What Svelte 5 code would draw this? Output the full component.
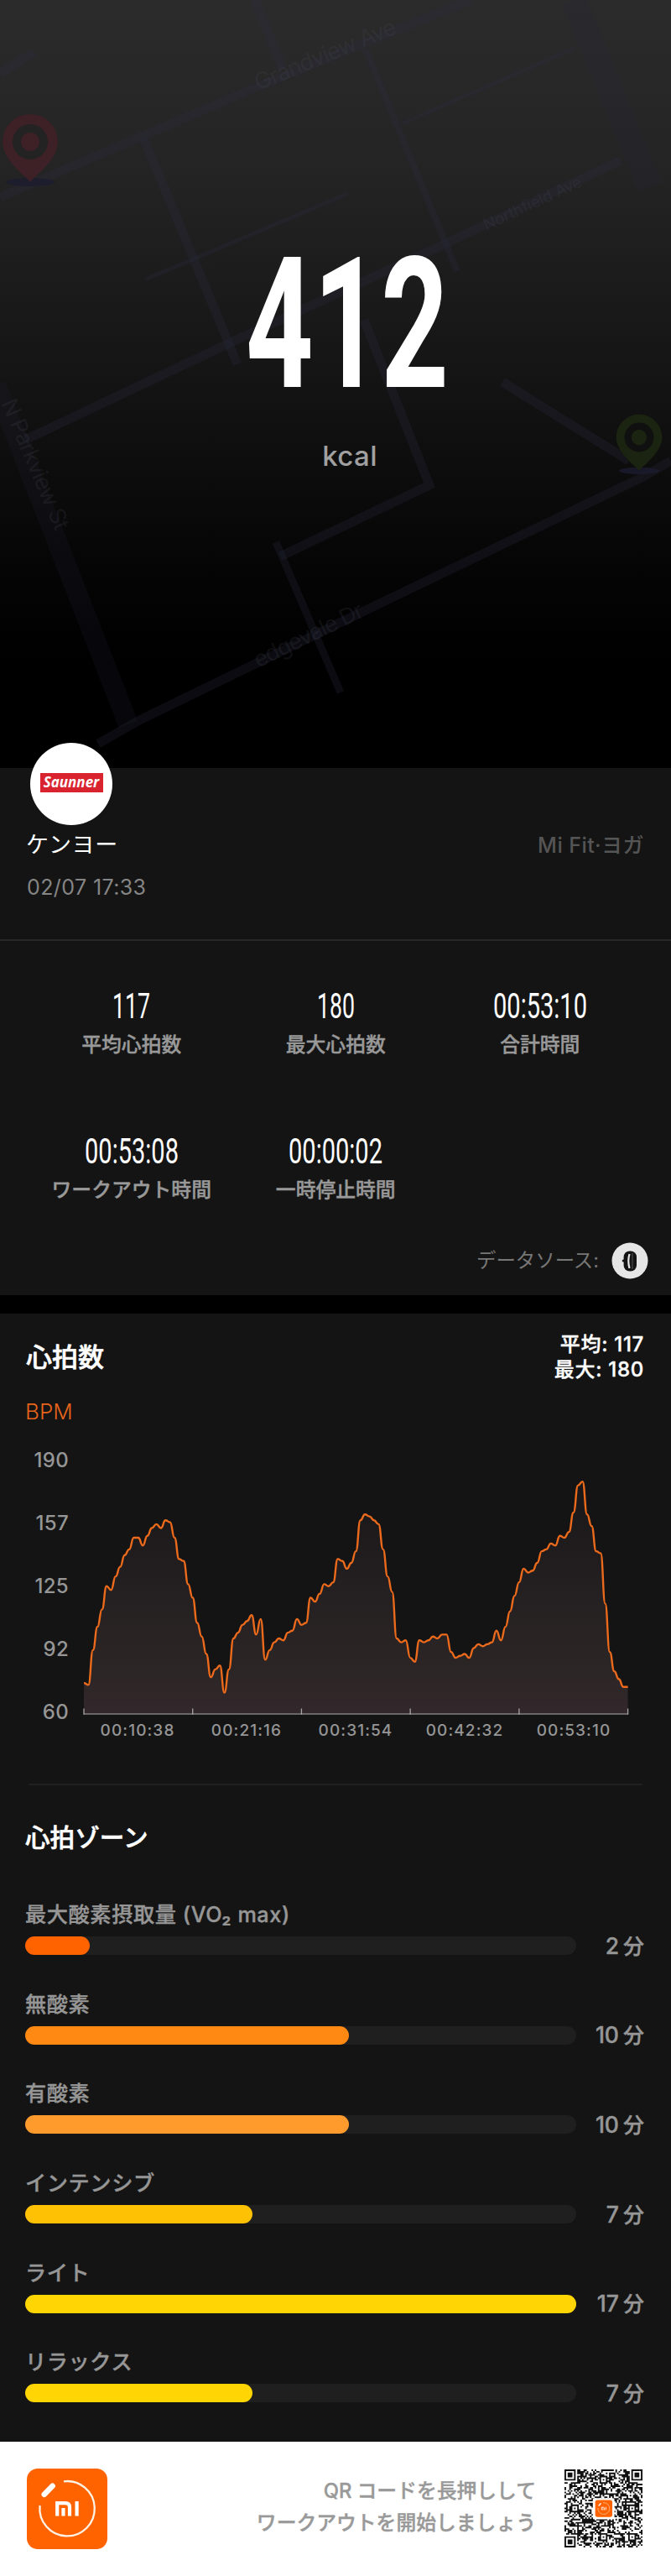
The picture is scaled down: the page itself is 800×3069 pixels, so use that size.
<script lang="ts">
	type Stat = { value: string; label: string; width: number };
	type Zone = { label: string; minutes: number; color: string };

	const stats: Stat[] = [
		{ value: "117", label: "平均心拍数", width: 45 },
		{ value: "180", label: "最大心拍数", width: 45 },
		{ value: "00:53:10", label: "合計時間", width: 112 },
		{ value: "00:53:08", label: "ワークアウト時間", width: 112 },
		{ value: "00:00:02", label: "一時停止時間", width: 112 },
	];

	const zones: Zone[] = [
		{ label: "最大酸素摂取量 (VO₂ max)", minutes: 2, color: "#ff6300" },
		{ label: "無酸素", minutes: 10, color: "#ff8912" },
		{ label: "有酸素", minutes: 10, color: "#ff9b2d" },
		{ label: "インテンシブ", minutes: 7, color: "#ffc103" },
		{ label: "ライト", minutes: 17, color: "#ffd603" },
		{ label: "リラックス", minutes: 7, color: "#ffd603" },
	];
	const maxMinutes = Math.max(...zones.map((z) => z.minutes));

	const yLabels = [190, 157, 125, 92, 60];
	const xLabels = ["00:10:38", "00:21:16", "00:31:54", "00:42:32", "00:53:10"];

	const bpm = [
		76, 75, 93, 105, 114, 126, 124, 131, 136, 142, 145, 151, 151, 147, 152,
		156, 158, 156, 160, 159, 151, 140, 139, 127, 120, 107, 100, 91, 79, 83,
		85, 71, 83, 99, 102, 106, 108, 111, 101, 109, 88, 93, 97, 99, 98, 102,
		103, 109, 106, 107, 120, 118, 122, 127, 126, 128, 140, 139, 135, 138,
		144, 160, 163, 162, 160, 158, 145, 131, 123, 99, 97, 98, 89, 87, 98, 97,
		98, 100, 99, 101, 101, 92, 89, 90, 91, 89, 94, 96, 95, 96, 97, 103, 98,
		105, 113, 121, 128, 135, 133, 134, 138, 144, 145, 148, 147, 152, 151,
		154, 164, 178, 180, 163, 157, 144, 143, 117, 92, 82, 78, 74, 74,
	];

	const chartWidth = 648.6;
	const chartHeight = 300;
	const step = chartWidth / (bpm.length - 1);
	const toY = (v: number) => chartHeight - ((v - 60) * chartHeight) / 130;

	const line = bpm
		.map((v, i) => {
			const x = i * step;
			if (i === 0) return `M0 ${toY(v)}`;
			const mid = x - step / 2;
			return `C${mid} ${toY(bpm[i - 1])} ${mid} ${toY(v)} ${x} ${toY(v)}`;
		})
		.join("");
	const area = `${line}V${chartHeight}H0Z`;

	const qrSize = 49;
	const qrPath = buildQr();

	function finder(x: number, y: number): boolean | null {
		const corners = [
			[0, 0],
			[qrSize - 7, 0],
			[0, qrSize - 7],
		];
		for (const [cx, cy] of corners) {
			const d = Math.max(Math.abs(x - cx - 3), Math.abs(y - cy - 3));
			if (d <= 4) return d !== 4 && d !== 2;
		}
		for (const cx of [6, 24, 42]) {
			for (const cy of [6, 24, 42]) {
				const d = Math.max(Math.abs(x - cx), Math.abs(y - cy));
				if (d <= 2) return d !== 1;
			}
		}
		return null;
	}

	function buildQr() {
		let seed = 20717;
		let d = "";
		for (let y = 0; y < qrSize; y++) {
			for (let x = 0; x < qrSize; x++) {
				seed = (seed * 1103515245 + 12345) % 2147483648;
				const fixed = finder(x, y);
				const dark = fixed === null ? seed / 2147483648 > 0.47 : fixed;
				if (dark) d += `M${x} ${y}h1v1h-1z`;
			}
		}
		return d;
	}
</script>

{#snippet pin(cx: number, cy: number, scale: number, color: string, hole: string)}
	<g transform="translate({cx} {cy}) scale({scale})">
		<ellipse cx="0" cy="48" rx="29" ry="5" fill="#1c1c30" opacity="0.8" />
		<path
			d="M0 48C-5 41-33 22-33 0A33 33 0 0 1 33 0C33 22 5 41 0 48Z"
			fill={color}
		/>
		<circle r="16" fill="none" stroke={hole} stroke-width="10" />
	</g>
{/snippet}

{#snippet miLogo()}
	<rect width="96" height="96" rx="13" fill="#ff6300" />
	<path
		d="M44 15.3A32.7 32.7 0 1 1 15.6 44"
		fill="none"
		stroke="#fff3e6"
		stroke-width="2.3"
	/>
	<path
		d="M20.8 30.8L30.6 20.8"
		stroke="#fff"
		stroke-width="6.6"
		stroke-linecap="round"
	/>
	<path
		d="M36.2 56.5V41.2H46Q51 41.2 51 46V56.5M43.5 56.5V47M59.6 56.5V39"
		fill="none"
		stroke="#fff"
		stroke-width="4.2"
	/>
{/snippet}

<main>
	<section class="hero">
		<svg class="map" width="800" height="915" viewBox="0 0 800 915">
			<g class="roads">
				<path d="M0 235L296 108L561 0" stroke-width="11" />
				<path d="M0 88L41 62" stroke-width="11" />
				<path d="M304 0L337 82" stroke-width="11" />
				<path d="M171 164L283 434" stroke-width="11" />
				<path d="M173 333L414 231" stroke-width="5" />
				<path d="M436 59L545 323" stroke-width="8" />
				<path d="M480 147L686 57" stroke-width="5" />
				<path d="M684 0L775 223" stroke-width="30" class="faint" />
				<path d="M30 524L286 403L536 288L740 191" stroke-width="11" />
				<path d="M-5 458L153 863" stroke-width="24" class="faint" />
				<path d="M434 381L512 578L334 663" stroke-width="11" />
				<path d="M329 646L406 825" stroke-width="9" />
				<path d="M117 886L168 857L434 728L765 569L800 549" stroke-width="11" />
				<path d="M599 455L750 549" stroke-width="11" />
			</g>
			<g class="streets">
				<text transform="translate(308 108) rotate(-22.5)" textLength="180">Grandview Ave</text>
				<text transform="translate(580 275) rotate(-25)" textLength="127" class="small">Northfield Ave</text>
				<text transform="translate(1 480) rotate(67)" textLength="167">N Parkview St</text>
				<text transform="translate(308 796) rotate(-26)" textLength="142">edgevale Dr</text>
			</g>
			{@render pin(36, 169, 1, "#3d2127", "#232323")}
			{@render pin(762, 521, 0.83, "#1a2410", "#101010")}
		</svg>
		<div class="calories">
			<svg width="252" height="156" viewBox="0 0 252 156">
				<text
					x="6"
					y="155"
					font-size="217"
					textLength="242"
					lengthAdjust="spacingAndGlyphs">412</text
				>
			</svg>
			<span class="unit">kcal</span>
		</div>
	</section>

	<section class="profile">
		<div class="avatar"><span>Saunner</span></div>
		<div class="row">
			<span class="name">ケンヨー</span>
			<span class="source">Mi Fit·ヨガ</span>
		</div>
		<div class="date">02/07 17:33</div>
	</section>

	<section class="summary">
		<div class="stats">
			{#each stats as stat}
				<div class="stat">
					<svg width={stat.width} height="32" viewBox="0 0 {stat.width} 32">
						<text
							x="0"
							y="31"
							font-size="42"
							textLength={stat.width}
							lengthAdjust="spacingAndGlyphs">{stat.value}</text
						>
					</svg>
					<span>{stat.label}</span>
				</div>
			{/each}
		</div>
		<div class="data-source">
			<span>データソース:</span>
			<svg width="44" height="44" viewBox="0 0 44 44">
				<circle cx="22" cy="22" r="21.5" fill="#e6e6e6" />
				<rect x="14.6" y="10.5" width="15.4" height="24" rx="7" fill="#141414" />
				<path d="M21.5 14Q19 22 21.5 31" fill="none" stroke="#e6e6e6" stroke-width="2.2" />
				<path d="M25 13V32" stroke="#555" stroke-width="1" />
				<circle cx="14.2" cy="22" r="1.5" fill="#141414" />
			</svg>
		</div>
	</section>

	<section class="heart">
		<header>
			<h2>心拍数</h2>
			<div class="extremes">
				<span>平均: 117</span>
				<span>最大: 180</span>
			</div>
		</header>
		<div class="bpm">BPM</div>
		<div class="chart">
			<div class="y-axis">
				{#each yLabels as label}
					<span>{label}</span>
				{/each}
			</div>
			<div class="plot">
				<svg width="652" height="304" viewBox="-1 0 652 304">
					<defs>
						<linearGradient
							id="fade"
							gradientUnits="userSpaceOnUse"
							x1="0"
							y1="20"
							x2="0"
							y2="300"
						>
							<stop offset="0" stop-color="#191718" />
							<stop offset="0.85" stop-color="#2d2627" />
							<stop offset="1" stop-color="#33272b" />
						</linearGradient>
					</defs>
					<path d={area} fill="url(#fade)" />
					<path d="M0 300H648.6" stroke="#818181" stroke-width="1.5" />
					{#each [0, 1, 2, 3, 4, 5] as tick}
						<path
							d="M{(tick * chartWidth) / 5} 293.5V300.7"
							stroke="#a5a5a5"
							stroke-width="1.3"
						/>
					{/each}
					<path d={line} fill="none" stroke="#ec6a1c" stroke-width="2.4" />
				</svg>
				<div class="x-axis">
					{#each xLabels as label}
						<span>{label}</span>
					{/each}
				</div>
			</div>
		</div>
	</section>

	<section class="zones">
		<h2>心拍ゾーン</h2>
		{#each zones as zone}
			<div class="zone">
				<span class="zone-label">{zone.label}</span>
				<div class="zone-row">
					<div class="track">
						<div
							class="fill"
							style="width: {(zone.minutes / maxMinutes) * 100}%; background: {zone.color}"
						></div>
					</div>
					<span class="minutes">{zone.minutes}<i>分</i></span>
				</div>
			</div>
		{/each}
	</section>

	<footer>
		<svg width="96" height="96" viewBox="0 0 96 96">{@render miLogo()}</svg>
		<p>
			QR<i>コードを長押しして</i><br />ワークアウトを開始しましょう
		</p>
		<svg class="qr" width="93" height="93" viewBox="0 0 49 49">
			<path d={qrPath} fill="#111" />
			<rect x="17.8" y="18" width="13.6" height="13.4" rx="1" fill="#fff" />
			<g transform="translate(19.3 19.2) scale(0.112)">{@render miLogo()}</g>
		</svg>
	</footer>
</main>

<style>
	:global(body) {
		margin: 0;
		background: #000;
	}

	main {
		width: 800px;
		height: 3069px;
		overflow: hidden;
		background: #000;
		color: #fff;
		font-family: Inter, "Noto Sans CJK JP", sans-serif;
		font-size: 24px;
		line-height: 30px;
	}

	section,
	footer {
		box-sizing: border-box;
	}

	h2 {
		margin: 0;
		font-size: 31px;
		font-weight: 500;
		line-height: 40px;
		-webkit-text-stroke: 0.6px;
	}

	i {
		font-style: normal;
	}

	.hero {
		position: relative;
		height: 915px;
		background: linear-gradient(#2b2b2b, #242424 22%, #161616 46%, #050505 74%, #000 86%);
	}

	.map {
		position: absolute;
		inset: 0;
	}

	.roads path {
		fill: none;
		stroke: rgba(44, 44, 66, 0.25);
	}

	.roads .faint {
		stroke: rgba(44, 44, 66, 0.17);
	}

	.streets text {
		fill: rgba(75, 75, 90, 0.2);
		font-size: 27px;
	}

	.streets .small {
		font-size: 19px;
	}

	.calories {
		position: relative;
		display: flex;
		flex-direction: column;
		align-items: center;
		padding: 306px 0 0 34px;
		gap: 61px;
	}

	.calories svg {
		margin-right: 8px;
		overflow: visible;
	}

	.calories text {
		fill: #fff;
		font-family: Roboto, sans-serif;
		font-weight: 700;
	}

	.unit {
		color: #a0a0a0;
		font-size: 33px;
		font-weight: 500;
		line-height: 40px;
		letter-spacing: 0.4px;
	}

	.profile {
		position: relative;
		height: 206px;
		padding: 77px 32px 0;
		border-bottom: 2px solid #282828;
		background: #141414;
	}

	.avatar {
		position: absolute;
		top: -30px;
		left: 36px;
		width: 98px;
		height: 98px;
		border-radius: 50%;
		background: #fff;
		display: flex;
		align-items: center;
		justify-content: center;
	}

	.avatar span {
		width: 75px;
		height: 23px;
		margin-bottom: 4px;
		background: #d9232e;
		font-family: "Open Sans", sans-serif;
		font-size: 17px;
		font-style: italic;
		font-weight: 700;
		line-height: 22px;
		text-align: center;
	}

	.row {
		display: flex;
		justify-content: space-between;
	}

	.name {
		margin-left: -1px;
		font-size: 27px;
		letter-spacing: 0.7px;
	}

	.source {
		color: #555;
		font-size: 25px;
		font-weight: 500;
		letter-spacing: 0.5px;
	}

	.date {
		margin-top: 20px;
		color: #858585;
		font-size: 25px;
		letter-spacing: 0.4px;
	}

	.summary {
		height: 422px;
		padding: 61px 36px 0 35px;
		background: #141414;
	}

	.stats {
		display: grid;
		grid-template-columns: repeat(3, 243.5px);
		grid-template-rows: 173px 137px;
	}

	.stat {
		display: flex;
		flex-direction: column;
		align-items: center;
		gap: 16px;
		color: #999;
		font-weight: 500;
		font-size: 23.8px;
		-webkit-text-stroke: 0.4px;
	}

	.stat svg {
		overflow: visible;
		-webkit-text-stroke: 0;
	}

	.stat text {
		fill: #fff;
		font-family: Roboto, sans-serif;
		font-weight: 400;
	}

	.data-source {
		display: flex;
		justify-content: flex-end;
		align-items: center;
		gap: 15px;
		margin: -12px -9px 0 0;
		color: #777;
		font-size: 23.4px;
	}

	.heart {
		height: 561px;
		margin-top: 22px;
		padding: 22px 32px 0 31px;
		background: #141414;
	}

	.heart header {
		display: flex;
		justify-content: space-between;
		height: 80px;
	}

	.heart h2 {
		margin-top: 10px;
	}

	.extremes {
		display: flex;
		flex-direction: column;
		align-items: flex-end;
		font-weight: 500;
		letter-spacing: 0.7px;
		-webkit-text-stroke: 0.4px;
	}

	.bpm {
		margin-left: -1px;
		color: #e8641b;
		font-size: 26px;
		font-weight: 300;
	}

	.chart {
		display: flex;
		margin-top: 28px;
	}

	.y-axis {
		display: flex;
		flex-direction: column;
		align-items: flex-end;
		gap: 45px;
		width: 51px;
		color: #969696;
		font-size: 24px;
		font-weight: 500;
		letter-spacing: 0.3px;
	}

	.plot {
		margin-left: 17px;
		padding-top: 17px;
	}

	.plot svg {
		display: block;
	}

	.x-axis {
		display: grid;
		grid-template-columns: repeat(5, 1fr);
		width: 650px;
		margin-top: 1px;
		color: #969696;
		font-size: 19px;
		font-weight: 500;
		letter-spacing: 1.1px;
		text-align: center;
	}

	.zones {
		height: 783px;
		padding: 42px 32px 0 30px;
		background: #141414;
	}

	.zones::before {
		content: "";
		display: block;
		height: 2px;
		margin: -43px 2px 42px 4px;
		background: #202020;
	}

	.zones h2 {
		margin-bottom: 57px;
		font-size: 29.6px;
	}

	.zone {
		height: 106.7px;
		color: #969696;
		font-weight: 500;
		-webkit-text-stroke: 0.4px;
	}

	.zone-label {
		display: block;
		font-size: 25.2px;
		letter-spacing: 0.6px;
	}

	.zone-row {
		display: flex;
		justify-content: space-between;
		align-items: center;
		height: 44px;
	}

	.track {
		width: 657px;
		height: 22px;
		border-radius: 11px;
		background: #1f1f1f;
	}

	.fill {
		height: 100%;
		border-radius: 11px;
	}

	.minutes {
		font-size: 26.5px;
	}

	.minutes i {
		margin-left: 5px;
		font-size: 25px;
	}

	footer {
		display: flex;
		align-items: flex-start;
		height: 160px;
		padding: 32px 34px 0 32px;
		background: #fff;
	}

	footer p {
		margin: 8px 34px 0 auto;
		color: #999;
		font-size: 23.8px;
		font-weight: 500;
		line-height: 38px;
		text-align: right;
		-webkit-text-stroke: 0.4px;
	}

	footer p i {
		margin-left: 6px;
	}

	.qr {
		margin-top: 1px;
	}
</style>
